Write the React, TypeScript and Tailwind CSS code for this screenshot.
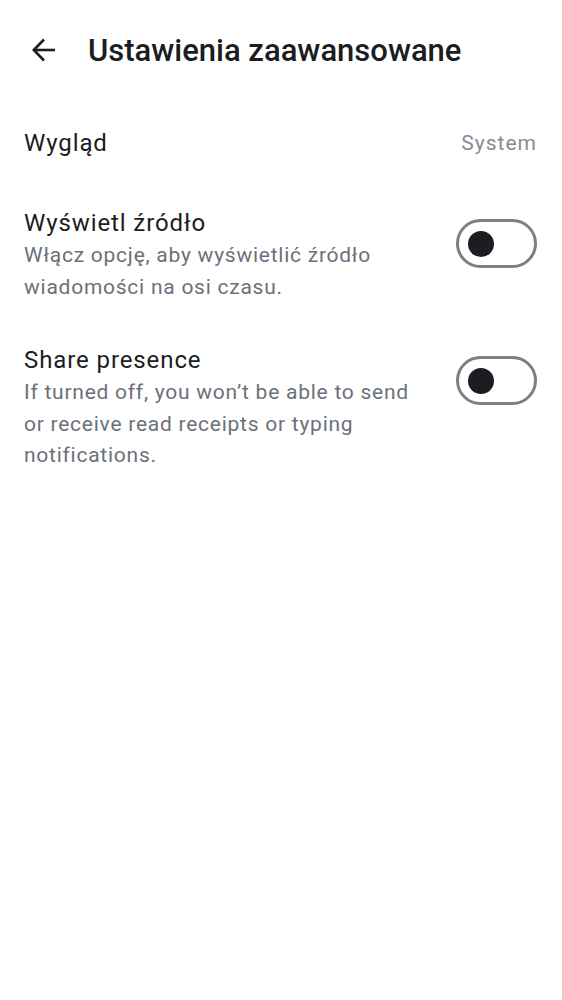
import React from "react";

function Toggle() {
  return (
    <div className="mt-[13px] flex h-[49px] w-[81px] shrink-0 items-center rounded-full border-[3px] border-[#7a8089] bg-white pl-[9px]">
      <div className="h-[26px] w-[26px] rounded-full bg-[#1b1d22]" />
    </div>
  );
}

export default function App() {
  return (
    <div className="min-h-[1000px] w-full bg-white text-[#1b1d22]" style={{ fontFamily: "Roboto, 'Noto Sans', sans-serif" }}>
      <div className="flex h-[100px] items-center">
        <div className="ml-[32px] flex h-[24px] w-[24px] items-center justify-center">
          <svg width="24" height="24" viewBox="0 0 24 24" fill="none" stroke="#1b1d22" strokeWidth="2.6" strokeLinecap="butt" strokeLinejoin="miter">
            <path d="M23 12H2" />
            <path d="M12 1.5L1.8 12L12 22.5" />
          </svg>
        </div>
        <h1 className="ml-[32px] text-[31px] font-medium leading-none">Ustawienia zaawansowane</h1>
      </div>

      <div className="flex h-[86px] items-center justify-between pl-6 pr-[25px]">
        <span className="text-[24px] leading-[34px] tracking-[0.9px]">Wygląd</span>
        <span className="text-[21px] leading-[30px] tracking-[1px] text-[#868c95]">System</span>
      </div>

      <div className="flex items-start gap-7 pl-6 pr-[25px] pt-[20px] pb-[20px]">
        <div className="min-w-0 flex-1">
          <div className="text-[24px] leading-[34px] tracking-[0.9px]">Wyświetl źródło</div>
          <div className="text-[21px] leading-[31.5px] tracking-[0.75px] text-[#6b717a]">
            Włącz opcję, aby wyświetlić źródło wiadomości na osi czasu.
          </div>
        </div>
        <Toggle />
      </div>

      <div className="flex items-start gap-7 pl-6 pr-[25px] pt-[20px] pb-[20px]">
        <div className="min-w-0 flex-1">
          <div className="text-[24px] leading-[34px] tracking-[0.9px]">Share presence</div>
          <div className="text-[21px] leading-[31.5px] tracking-[0.75px] text-[#6b717a]">
            If turned off, you won’t be able to send or receive read receipts or typing notifications.
          </div>
        </div>
        <Toggle />
      </div>
    </div>
  );
}
